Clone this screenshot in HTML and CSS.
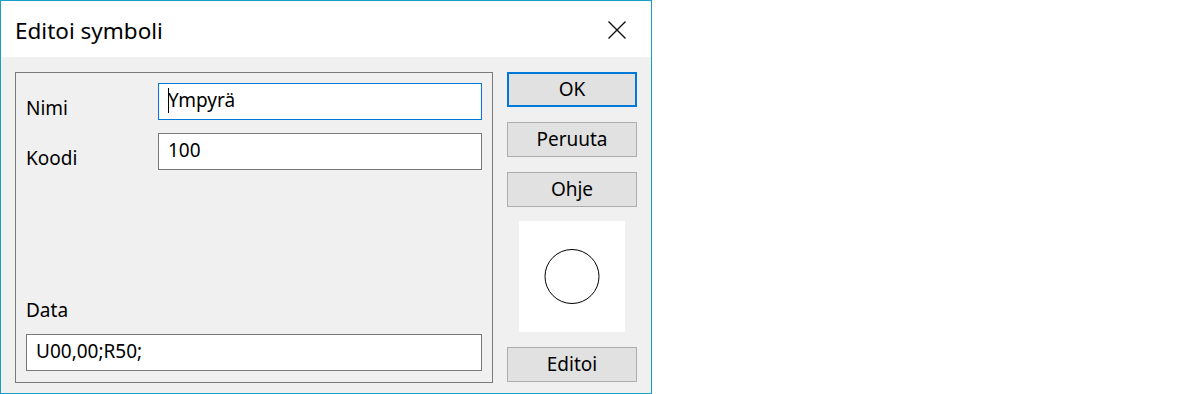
FILE: index.html
```html
<!DOCTYPE html>
<html lang="fi">

<head>
    <meta charset="UTF-8">
    <title>Editoi symboli</title>
    <link rel="stylesheet" href="styles.css">
</head>

<body>

    <div class="window">
        <div class="titlebar">
            <span class="title">Editoi symboli</span>
            <svg class="close" width="18" height="18" viewBox="0 0 18 18">
                <path d="M0.5 0.5 L17.5 17.5 M17.5 0.5 L0.5 17.5" stroke="#111" stroke-width="1.4" fill="none" />
            </svg>
        </div>

        <div class="content">
            <!-- Symbol fields -->
            <div class="group">
                <div class="row">
                    <span class="label">Nimi</span>
                    <div class="field focused"><span class="caret"></span>Ympyrä</div>
                </div>
                <div class="row">
                    <span class="label">Koodi</span>
                    <div class="field">100</div>
                </div>
                <div class="data">
                    <div class="label">Data</div>
                    <div class="field">U00,00;R50;</div>
                </div>
            </div>

            <!-- Buttons and preview -->
            <div class="buttons">
                <button class="btn default">OK</button>
                <button class="btn">Peruuta</button>
                <button class="btn">Ohje</button>
                <div class="preview">
                    <svg width="106" height="111" viewBox="0 0 106 111">
                        <circle cx="53" cy="55.5" r="27" stroke="#000" stroke-width="1" fill="none" />
                    </svg>
                </div>
                <button class="btn last">Editoi</button>
            </div>
        </div>
    </div>

</body>

</html>
```

FILE: styles.css
```css
/* Global */
body {
    margin: 0;
    background-color: #fff;
    font-family: 'Noto Sans', 'DejaVu Sans', sans-serif;
    font-size: 19px;
    color: #000;
}

/* Dialog window */
.window {
    width: 652px;
    height: 394px;
    box-sizing: border-box;
    border: 1px solid #1a9fc4;
    background-color: #f0f0f0;
    display: flex;
    flex-direction: column;
}

.titlebar {
    height: 56px;
    flex-shrink: 0;
    background-color: #fff;
    display: flex;
    align-items: center;
    justify-content: space-between;
    padding: 0 25px 0 14px;
}

.title {
    font-size: 22.5px;
    margin-top: 2px;
}

.close {
    display: block;
    margin-top: 2px;
}

.content {
    flex: 1;
    min-height: 0;
    display: flex;
    gap: 14px;
    padding: 15px 14px 10px 14px;
}

/* Group box */
.group {
    width: 478px;
    box-sizing: border-box;
    border: 1px solid #7a7a7a;
    padding: 10px 10px 11px 10px;
    display: flex;
    flex-direction: column;
    gap: 13px;
}

.row {
    display: flex;
    height: 37px;
}

.row .label {
    width: 132px;
    flex-shrink: 0;
    padding-top: 12px;
}

.field {
    flex: 1;
    height: 37px;
    box-sizing: border-box;
    border: 1px solid #7a7a7a;
    background-color: #fff;
    padding: 0 9px 3px 9px;
    display: flex;
    align-items: center;
}

.field.focused {
    border-color: #0078d7;
}

.caret {
    width: 1px;
    height: 25px;
    background-color: #000;
    margin-right: -1px;
}

.data {
    margin-top: auto;
    display: flex;
    flex-direction: column;
}

.data .label {
    margin-bottom: 11px;
}

.data .field {
    flex: none;
}

/* Right column */
.buttons {
    width: 130px;
    display: flex;
    flex-direction: column;
}

.btn {
    height: 35px;
    flex-shrink: 0;
    box-sizing: border-box;
    border: 1px solid #adadad;
    background-color: #e1e1e1;
    font-family: inherit;
    font-size: 19px;
    color: #000;
    padding: 0 0 2px 0;
    margin: 0 0 15px 0;
}

.btn.default {
    border: 2px solid #0078d7;
}

.btn.last {
    margin-bottom: 0;
}

.preview {
    width: 106px;
    height: 111px;
    flex-shrink: 0;
    align-self: center;
    background-color: #fff;
    margin: -1px 0 15px 0;
}

.preview svg {
    display: block;
}
```
